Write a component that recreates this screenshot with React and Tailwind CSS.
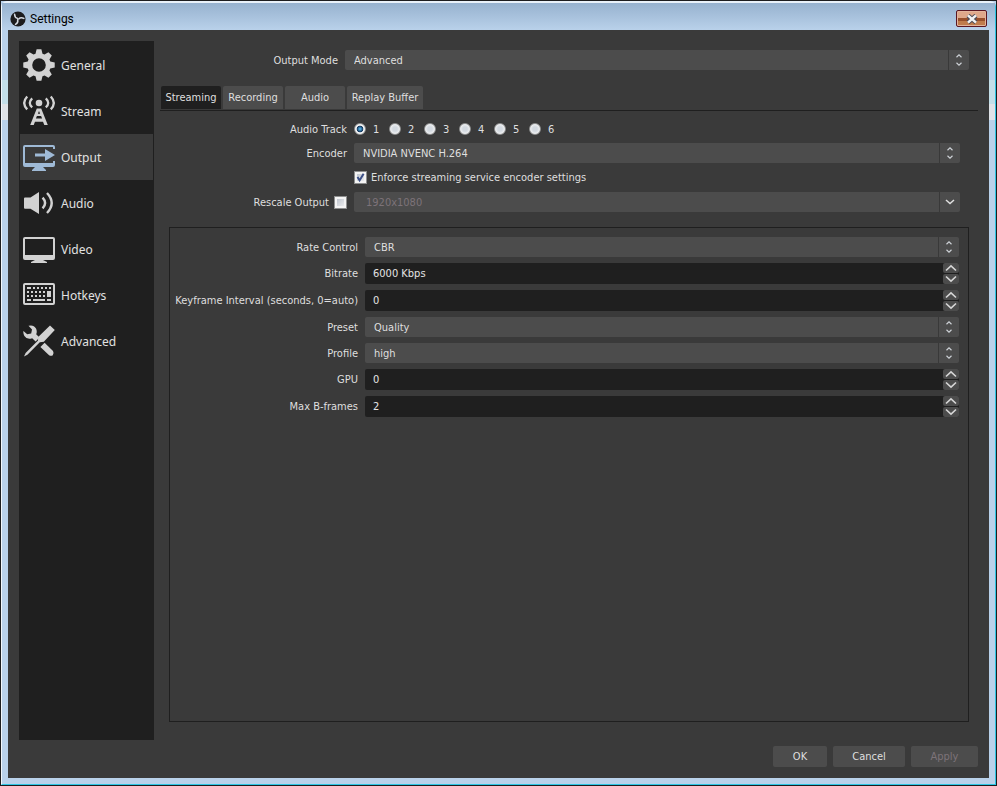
import React, { useState } from "react";

const gearPath = (() => {
  const pts = [];
  for (let i = 0; i < 8; i++) {
    const a = (i * Math.PI) / 4 - Math.PI / 2;
    [
      [11.8, -0.3],
      [15.9, -0.15],
      [15.9, 0.15],
      [11.8, 0.3],
    ].forEach(([r, d]) => {
      pts.push(`${(16 + r * Math.cos(a + d)).toFixed(2)} ${(16 + r * Math.sin(a + d)).toFixed(2)}`);
    });
  }
  return `M${pts.join("L")}ZM16 9.2a6.8 6.8 0 1 0 0 13.6a6.8 6.8 0 1 0 0-13.6Z`;
})();

function Icon({ children, className = "" }) {
  return (
    <svg viewBox="0 0 32 32" className={`size-8 shrink-0 ${className}`} fill="currentColor" aria-hidden="true">
      {children}
    </svg>
  );
}

const icons = {
  General: (
    <Icon>
      <path fillRule="evenodd" d={gearPath} />
    </Icon>
  ),
  Stream: (
    <Icon>
      <circle cx="16" cy="8" r="3.3" />
      <path
        d="M4.2 1.4Q-1.800 8 4.2 14.4M27.8 1.4Q33.8 8 27.8 14.4M9.2 3.4Q4.4 8 9.2 12.4M22.8 3.4Q27.6 8 22.8 12.4"
        fill="none"
        stroke="currentColor"
        strokeWidth="2.3"
      />
      <path
        fillRule="evenodd"
        d="M13.800 13.500h4.4L24.800 30H21.300L20 26.800H12L10.700 30H7.200ZM16 16L14.900 18.700H17.100ZM13.900 21L12.900 23.600H19.100L18.100 21Z"
      />
    </Icon>
  ),
  Output: (
    <Icon className="text-[#9fbad6]">
      <path d="M2 4H30Q32 4 32 6V8H30V6H2V22H30V20H32V24Q32 26 30 26H20L23 29V30H9V29L12 26H2Q0 26 0 24V6Q0 4 2 4Z" />
      <path d="M12 12.4H22V8L32 14L22 20V15.6H12Z" />
    </Icon>
  ),
  Audio: (
    <Icon>
      <path d="M2 10.5H7.5L16 5V27L7.5 21.8H2Q1 21.8 1 20.8V11.5Q1 10.5 2 10.5Z" />
      <path
        d="M19.6 10.6Q24.6 16 19.6 21.4M24 6Q33.4 16 24 26"
        fill="none"
        stroke="currentColor"
        strokeWidth="2.4"
      />
    </Icon>
  ),
  Video: (
    <Icon>
      <path
        fillRule="evenodd"
        d="M2 4H30Q32 4 32 6V25Q32 27 30 27H20L24 29V30H8V29L12 27H2Q0 27 0 25V6Q0 4 2 4ZM2 6V22H30V6Z"
      />
    </Icon>
  ),
  Hotkeys: (
    <Icon>
      <path
        fillRule="evenodd"
        d="M2 4H30Q32 4 32 6V24Q32 26 30 26H2Q0 26 0 24V6Q0 4 2 4ZM2 6V24H30V6Z"
      />
      <path d="M4 8H8V10H4ZM10 8H12V10H10ZM14 8H16V10H14ZM18 8H20V10H18ZM22 8H24V10H22ZM26 8H28V10H26ZM4 12H6V14H4ZM8 12H10V14H8ZM12 12H14V14H12ZM16 12H18V14H16ZM20 12H22V14H20ZM24 12H28V18H24ZM4 16H6V18H4ZM8 16H10V18H8ZM12 16H14V18H12ZM16 16H18V18H16ZM20 16H22V18H20ZM4 20H8V22H4ZM10 20H22V22H10ZM24 20H28V22H24Z" />
    </Icon>
  ),
  Advanced: (
    <Icon>
      <path d="M5.500 .8Q10.500 -.6 13 3.500Q14.400 6.500 13.200 9.200L16.500 12.600L12.600 16.400L9.200 13.200Q4 15 1.400 11Q0 8.500 .4 6L4.200 9.200L8.200 8.400L9 4.400Z" />
      <path d="M17.400 22L21.600 17.800L30 26Q31.400 28.600 29.800 30.200Q28 31.600 25.800 30Z" />
      <path d="M27 .4L31.800 5L20.800 16.800L16.800 17.200L4.400 29.800L1 31.400L2.600 28L15 15.400L15.200 12Z" />
    </Icon>
  ),
};

function ChevronPair() {
  return (
    <svg viewBox="0 0 8 12" className="h-3 w-2" fill="none" stroke="#cfd3d8" strokeWidth="1.2" aria-hidden="true">
      <path d="M1.500 3.200L4 .9L6.500 3.200M1.500 8.800L4 11.100L6.500 8.800" />
    </svg>
  );
}

function Select({ id, value, options = [], disabled, single, label }) {
  return (
    <div className="relative flex h-5 min-w-0 flex-1">
      <select
        id={id}
        aria-label={label}
        defaultValue={value}
        disabled={disabled}
        className="h-5 w-full appearance-none rounded-xs bg-[#4c4c4c] pt-0.5 pl-[9px] pr-6 text-[#dfdfdf] outline-none disabled:pl-3 disabled:text-[#7d7379] disabled:opacity-100"
      >
        {[value, ...options].map((o) => (
          <option key={o}>{o}</option>
        ))}
      </select>
      <span className="pointer-events-none absolute inset-y-0 right-0 flex w-[21px] items-center justify-center border-l border-[#393939]">
        {single ? (
          <svg viewBox="0 0 10 6" className="h-1.5 w-2.5" fill="none" stroke="#dfdfdf" strokeWidth="1.500" aria-hidden="true">
            <path d="M1 1L5 4.600L9 1" />
          </svg>
        ) : (
          <ChevronPair />
        )}
      </span>
    </div>
  );
}

function SpinBox({ id, value, suffix = "" }) {
  const [n, setN] = useState(value);
  const button =
    "flex h-2.5 w-4 items-center justify-center rounded-xs bg-[#4c4c4c]";
  return (
    <div className="flex h-[21px] min-w-0 flex-1 rounded-xs bg-[#1f1f1f]">
      <input
        id={id}
        type="text"
        inputMode="numeric"
        value={`${n}${suffix}`}
        onChange={(e) => setN(parseInt(e.target.value, 10) || 0)}
        className="min-w-0 flex-1 bg-transparent pt-0.5 pl-2 text-[#e4e4e4] outline-none"
      />
      <div className="flex flex-col justify-between">
        <button type="button" aria-label="Increase" className={button} onClick={() => setN(n + 1)}>
          <svg viewBox="0 0 12 8" className="h-2 w-3" fill="none" stroke="#d6d6d6" strokeWidth="1.600" aria-hidden="true">
            <path d="M1 6.500L6 1.800L11 6.500" />
          </svg>
        </button>
        <button type="button" aria-label="Decrease" className={button} onClick={() => setN(Math.max(0, n - 1))}>
          <svg viewBox="0 0 12 8" className="h-2 w-3" fill="none" stroke="#d6d6d6" strokeWidth="1.600" aria-hidden="true">
            <path d="M1 1.500L6 6.200L11 1.500" />
          </svg>
        </button>
      </div>
    </div>
  );
}

function CheckBox({ id, defaultChecked, label }) {
  return (
    <span className="relative flex size-[13px] shrink-0">
      <input
        id={id}
        type="checkbox"
        aria-label={label}
        defaultChecked={defaultChecked}
        className="peer size-[13px] appearance-none border border-[#8e8f8f] bg-linear-to-br from-[#b4bbc6] to-[#f6f6f6] ring-2 ring-inset ring-[#f4f4f4]"
      />
      <svg
        viewBox="0 0 13 13"
        className="pointer-events-none absolute inset-0 hidden size-[13px] peer-checked:block"
        fill="none"
        stroke="#3b4f87"
        strokeWidth="2"
        aria-hidden="true"
      >
        <path d="M3.500 6L5.600 9.400L9.600 2.800" />
      </svg>
    </span>
  );
}

function Row({ label, htmlFor, width, children }) {
  return (
    <div className="flex items-center gap-[7px]">
      <label htmlFor={htmlFor} className={`${width} shrink-0 pt-0.5 text-right whitespace-nowrap`}>
        {label}
      </label>
      {children}
    </div>
  );
}

function FrameSide() {
  return (
    <div className="flex w-1.5 shrink-0 flex-col bg-[#b9d1ea]">
      <div className="h-[50px]" />
      <div className="h-6 bg-[#c3dfe9]" />
      <div className="h-4 bg-[#dfe3e8]" />
    </div>
  );
}

function TitleBar() {
  return (
    <header className="flex h-[27px] items-center justify-between bg-linear-to-b from-[#97b2cf] to-[#b9d1ea] pr-2 pl-2">
      <div className="flex items-center gap-1 pt-1">
        <svg viewBox="0 0 16 16" className="size-4" aria-hidden="true">
          <circle cx="8" cy="8" r="7.600" fill="#1c1c1e" />
          <g fill="none" stroke="#d6dbe2" strokeWidth="1.500" strokeLinecap="round">
            <path d="M4.600 3.200Q4.600 6.600 7.600 7.400" />
            <path d="M4.600 3.200Q4.600 6.600 7.600 7.400" transform="rotate(120 8 8)" />
            <path d="M4.600 3.200Q4.600 6.600 7.600 7.400" transform="rotate(240 8 8)" />
          </g>
        </svg>
        <h1 className="font-['Roboto',sans-serif] text-xs text-black">Settings</h1>
      </div>
      <button
        type="button"
        aria-label="Close"
        className="mt-1 flex h-[17px] w-[31px] items-center justify-center rounded-xs border border-[#5b1722] bg-[linear-gradient(#dfa88a_0_48%,#984f2b_48%_68%,#c07c4c_68%)] ring-1 ring-inset ring-[#e3b49c]"
      >
        <svg viewBox="0 0 12 10" className="h-2.5 w-3" aria-hidden="true">
          <path d="M2 1.500L10 8.500M10 1.500L2 8.500" stroke="#4b4a55" strokeWidth="4.500" />
          <path d="M2 1.400L10 8.600M10 1.400L2 8.600" stroke="#f2f2f2" strokeWidth="2.600" />
        </svg>
      </button>
    </header>
  );
}

function Sidebar() {
  const [active, setActive] = useState("Output");
  return (
    <nav className="w-[135px] shrink-0 bg-[#1f1f1f] p-px font-['Noto_Sans',sans-serif] text-xs">
      {Object.keys(icons).map((name) => (
        <button
          key={name}
          type="button"
          onClick={() => setActive(name)}
          className={`flex h-[46px] w-full items-center gap-1.5 pl-[3px] text-left text-[#d2d2d2] ${
            active === name ? "bg-[#3a3a3a]" : ""
          }`}
        >
          {icons[name]}
          <span className="pt-0.5 text-[#e1e1e1]">{name}</span>
        </button>
      ))}
    </nav>
  );
}

const tabs = [
  ["Streaming", "w-[60px]"],
  ["Recording", "w-[60px]"],
  ["Audio", "w-[60px]"],
  ["Replay Buffer", "w-[76px]"],
];

function Tabs() {
  const [active, setActive] = useState("Streaming");
  return (
    <div role="tablist" className="mt-4 flex gap-0.5 border-b border-[#1f1f1f] pb-px pl-px">
      {tabs.map(([name, width]) => (
        <button
          key={name}
          type="button"
          role="tab"
          aria-selected={active === name}
          onClick={() => setActive(name)}
          className={`${width} h-[23px] rounded-t-xs pt-0.5 text-center whitespace-nowrap ${
            active === name ? "bg-[#1f1f1f]" : "bg-[#4c4c4c]"
          }`}
        >
          {name}
        </button>
      ))}
    </div>
  );
}

function AudioTracks() {
  return (
    <div role="radiogroup" aria-labelledby="track-label" className="flex items-center">
      {[1, 2, 3, 4, 5, 6].map((n) => (
        <label key={n} className="flex w-[35px] items-center gap-[7px]">
          <input
            type="radio"
            name="track"
            defaultChecked={n === 1}
            className="size-3 appearance-none rounded-full border border-[#8e8f8f] bg-[radial-gradient(circle,#d3d9e0_30%,#f4f4f4_75%)] checked:bg-[radial-gradient(circle,#4aa3d8_10%,#15375c_42%,#f4f4f4_52%)]"
          />
          <span className="pt-0.5">{n}</span>
        </label>
      ))}
    </div>
  );
}

function EncoderPanel() {
  const w = "w-[188px]";
  return (
    <section className="mx-[9px] mt-[15px] flex flex-1 flex-col gap-1.5 border border-[#1f1f1f] py-[9px] pr-[9px]">
      <Row label="Rate Control" htmlFor="rate" width={w}>
        <Select id="rate" value="CBR" options={["VBR", "CQP", "Lossless"]} />
      </Row>
      <Row label="Bitrate" htmlFor="bitrate" width={w}>
        <SpinBox id="bitrate" value={6000} suffix=" Kbps" />
      </Row>
      <Row label="Keyframe Interval (seconds, 0=auto)" htmlFor="keyframe" width={w}>
        <SpinBox id="keyframe" value={0} />
      </Row>
      <Row label="Preset" htmlFor="preset" width={w}>
        <Select id="preset" value="Quality" options={["Performance"]} />
      </Row>
      <Row label="Profile" htmlFor="profile" width={w}>
        <Select id="profile" value="high" options={["main", "baseline"]} />
      </Row>
      <Row label="GPU" htmlFor="gpu" width={w}>
        <SpinBox id="gpu" value={0} />
      </Row>
      <Row label="Max B-frames" htmlFor="bframes" width={w}>
        <SpinBox id="bframes" value={2} />
      </Row>
    </section>
  );
}

function OutputPage() {
  const w = "w-[187px]";
  return (
    <main className="flex min-w-0 flex-1 flex-col">
      <div className="mr-[9px] pt-[9px]">
        <Row label="Output Mode" htmlFor="mode" width="w-[178px]">
          <Select id="mode" value="Advanced" options={["Simple"]} />
        </Row>
      </div>
      <Tabs />
      <div className="mr-[18px] flex flex-col pt-2">
        <div className="flex h-5 items-center gap-[7px]">
          <span id="track-label" className={`${w} shrink-0 pt-0.5 text-right`}>Audio Track</span>
          <AudioTracks />
        </div>
        <div className="mt-1">
          <Row label="Encoder" htmlFor="encoder" width={w}>
            <Select id="encoder" value="NVIDIA NVENC H.264" options={["x264"]} />
          </Row>
        </div>
        <div className="my-[5px] flex h-[19px] items-center gap-1 pl-[194px]">
          <CheckBox id="enforce" defaultChecked />
          <label htmlFor="enforce" className="pt-0.5">Enforce streaming service encoder settings</label>
        </div>
        <div className="flex items-center gap-[7px]">
          <div className={`${w} flex shrink-0 items-center justify-end gap-[5px]`}>
            <label htmlFor="rescale" className="pt-0.5">Rescale Output</label>
            <CheckBox id="rescale" />
          </div>
          <Select label="Rescale resolution" value="1920x1080" disabled single />
        </div>
      </div>
      <EncoderPanel />
    </main>
  );
}

export default function App() {
  const btn = "h-[21px] rounded-xs bg-[#4c4c4c] pt-0.5 disabled:text-[#7d7379]";
  return (
    <div className="flex min-h-screen flex-col border border-[#1d1d1f] bg-[#b9d1ea] font-['DejaVu_Sans_Condensed','DejaVu_Sans',sans-serif] text-[11px] text-[#dfdfdf]">
      <div className="flex flex-1 flex-col rounded-t-md border-t-2 border-r border-b border-l border-t-[#e9f1f9] border-r-[#2cc6e4] border-b-[#2cc6e4] border-l-[#f2f7fc]">
        <TitleBar />
        <div className="flex flex-1">
          <FrameSide />
          <div className="flex min-w-0 flex-1 flex-col bg-[#3a3a3a] px-[11px] pt-[11px] pb-[11px]">
            <div className="flex flex-1 gap-1.5">
              <Sidebar />
              <div className="flex min-w-0 flex-1 flex-col pb-[18px]">
                <OutputPage />
              </div>
            </div>
            <div className="mt-1.5 flex justify-end gap-1.5">
              <button type="button" className={`${btn} w-[54px]`}>OK</button>
              <button type="button" className={`${btn} w-[72px]`}>Cancel</button>
              <button type="button" disabled className={`${btn} w-[67px]`}>Apply</button>
            </div>
          </div>
          <FrameSide />
        </div>
        <div className="h-1.5" />
      </div>
    </div>
  );
}
